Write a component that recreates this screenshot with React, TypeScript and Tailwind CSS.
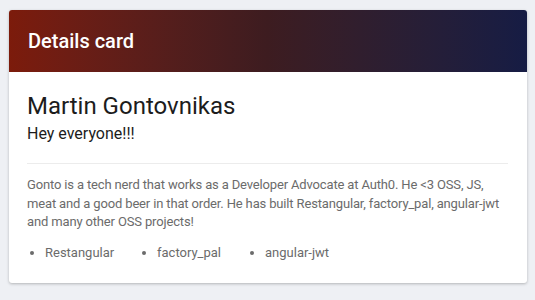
import React from "react";

export default function App() {
  return (
    <div
      className="w-[535px] h-[300px] bg-[#eef0f4] pt-[10px] pl-[9px] pr-[8px]"
      style={{ fontFamily: "Roboto, 'Liberation Sans', sans-serif" }}
    >
      <div className="bg-white rounded-[3px] overflow-hidden shadow-[0_1px_3px_rgba(0,0,0,0.25)] h-[273px]">
        <div className="h-[62px] flex items-center px-[19px] bg-gradient-to-r from-[#7c1b0b] via-[#3d1c20] to-[#161c44]">
          <span className="text-white text-[20px] font-medium">Details card</span>
        </div>
        <div className="px-[18px] pt-[19px]">
          <div className="text-[24px] leading-[30px] text-[#1c1c1c]">Martin Gontovnikas</div>
          <div className="text-[16px] leading-[22px] text-[#1c1c1c] mt-[2px]">Hey everyone!!!</div>
          <div className="h-px bg-[#ececec] mt-[18px] mr-[1px]" />
          <p className="text-[13px] leading-[18.5px] text-[#6b6b6b] mt-[12px] tracking-[-0.15px]">
            Gonto is a tech nerd that works as a Developer Advocate at Auth0. He &lt;3 OSS, JS,
            meat and a good beer in that order. He has built Restangular, factory_pal, angular-jwt
            and many other OSS projects!
          </p>
          <ul className="flex mt-[12px] text-[13px] leading-[18px] text-[#6b6b6b] list-disc pl-[18px]">
            <li className="w-[112px]">Restangular</li>
            <li className="w-[108px]">factory_pal</li>
            <li>angular-jwt</li>
          </ul>
        </div>
      </div>
    </div>
  );
}
